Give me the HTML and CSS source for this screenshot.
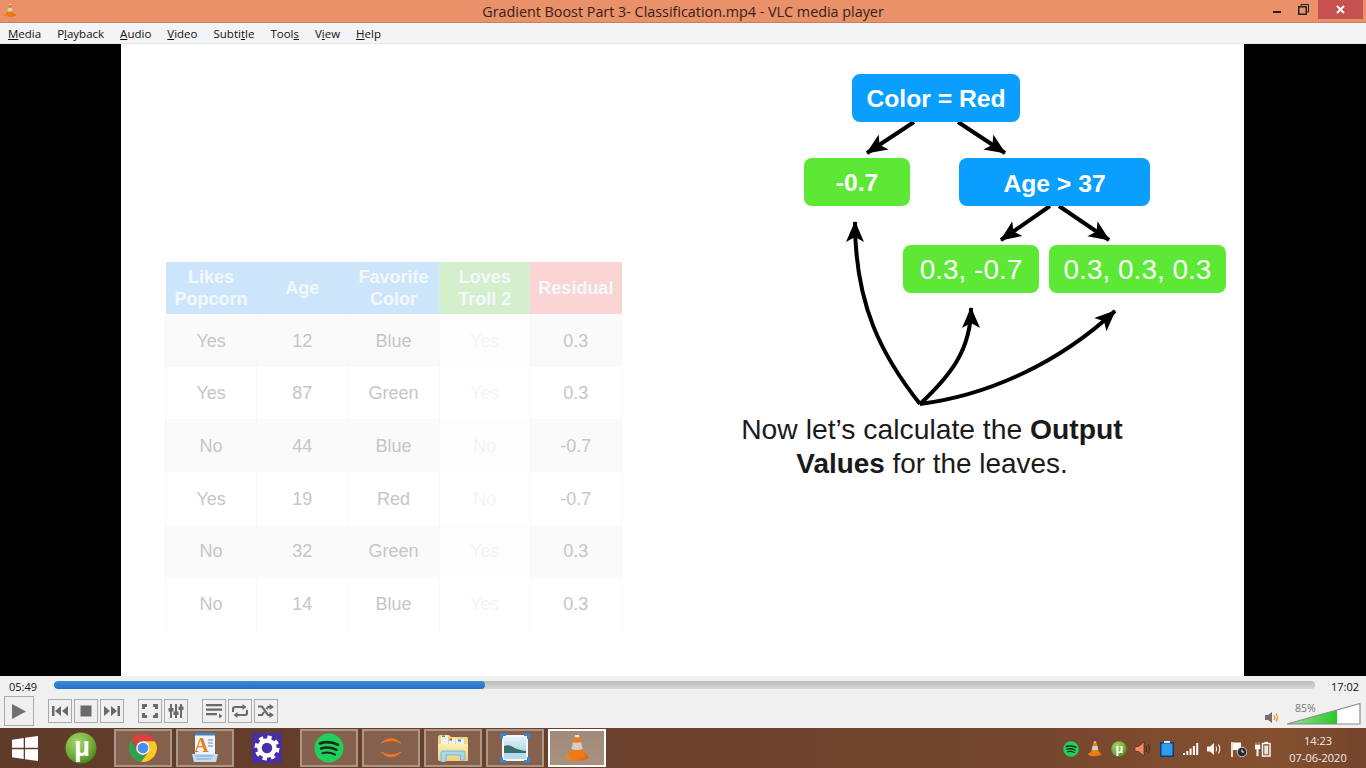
FILE: index.html
```html
<!DOCTYPE html>
<html lang="en">
<head>
<meta charset="utf-8">
<title>VLC media player</title>
<link rel="stylesheet" href="styles.css">
</head>
<body>
<svg class="defs" width="0" height="0" aria-hidden="true">
  <defs>
    <linearGradient id="cone" x1="0" y1="0" x2="1" y2="0"><stop offset="0" stop-color="#f08a1c"/><stop offset="1" stop-color="#e8600c"/></linearGradient>
    <radialGradient id="ut" cx=".38" cy=".3" r=".8"><stop offset="0" stop-color="#a6d468"/><stop offset=".6" stop-color="#6fae38"/><stop offset="1" stop-color="#3f7a1e"/></radialGradient>
    <linearGradient id="vol" x1="0" y1="0" x2="1" y2="0"><stop offset="0" stop-color="#a4dca4"/><stop offset="1" stop-color="#22cc22"/></linearGradient>
    <linearGradient id="sky" x1="0" y1="0" x2="0" y2="1"><stop offset="0" stop-color="#e6f4fa"/><stop offset="1" stop-color="#8cc8e4"/></linearGradient>
    <linearGradient id="fold" x1="0" y1="0" x2="0" y2="1"><stop offset="0" stop-color="#fdf0b0"/><stop offset="1" stop-color="#edd27a"/></linearGradient>
    <symbol id="i-cone" viewBox="0 0 32 32">
      <path d="M3 25 L8 22 H24 L29 25 V28 Q16 33 3 28Z" fill="url(#cone)"/>
      <path d="M13.500 2 H18.500 L25 26 Q16 29 7 26Z" fill="#f07a14"/>
      <path d="M13.200 3 Q16 4.400 18.800 3 L18 1 H14Z" fill="#e6e6e6"/>
      <path d="M11.600 9 Q16 11 20.400 9 L22.500 17 Q16 19.600 9.500 17Z" fill="#cfcfcf"/>
    </symbol>
    <symbol id="i-spot" viewBox="0 0 32 32">
      <circle cx="16" cy="16" r="15.500" fill="#1ed05c"/>
      <path d="M6.500 11 Q16 8 25.500 12.500" fill="none" stroke="#1a2a1c" stroke-width="3" stroke-linecap="round"/>
      <path d="M7.500 16.500 Q16 14 24 18" fill="none" stroke="#1a2a1c" stroke-width="2.600" stroke-linecap="round"/>
      <path d="M9 21.500 Q16 19.600 22.500 23" fill="none" stroke="#1a2a1c" stroke-width="2.200" stroke-linecap="round"/>
    </symbol>
    <symbol id="i-ut" viewBox="0 0 32 32">
      <circle cx="16" cy="16" r="15.500" fill="url(#ut)"/>
      <text x="17" y="24" text-anchor="middle" class="ut-mu">µ</text>
    </symbol>
  </defs>
</svg>

<header class="titlebar">
  <div class="title-left"><svg class="ic-title" aria-hidden="true"><use href="#i-cone"/></svg></div>
  <div class="title-text">Gradient Boost Part 3- Classification.mp4 - VLC media player</div>
  <div class="title-right">
    <span class="win-min"></span>
    <svg class="win-restore" viewBox="0 0 11 11" aria-hidden="true"><path d="M3 2.500V.5H10.500V8H8.500" fill="none" stroke="#222" stroke-width="1"/><rect x=".75" y="2.750" width="7.500" height="7.500" fill="none" stroke="#222" stroke-width="1.500"/></svg>
    <div class="win-close"><svg class="win-x" viewBox="0 0 9 9" aria-hidden="true"><path d="M1 1L8 8M8 1L1 8" stroke="#fff" stroke-width="2"/></svg></div>
  </div>
</header>

<nav class="menubar">
  <span><u>M</u>edia</span><span>P<u>l</u>ayback</span><span><u>A</u>udio</span><span><u>V</u>ideo</span><span>Subti<u>t</u>le</span><span>Tool<u>s</u></span><span>V<u>i</u>ew</span><span><u>H</u>elp</span>
</nav>

<main class="video">
  <section class="slide">
    <table class="data">
      <thead>
        <tr><th class="blue">Likes<br>Popcorn</th><th class="blue">Age</th><th class="blue">Favorite<br>Color</th><th class="green">Loves<br>Troll 2</th><th class="red">Residual</th></tr>
      </thead>
      <tbody>
        <tr><td>Yes</td><td>12</td><td>Blue</td><td class="faint">Yes</td><td>0.3</td></tr>
        <tr><td>Yes</td><td>87</td><td>Green</td><td class="faint">Yes</td><td>0.3</td></tr>
        <tr><td>No</td><td>44</td><td>Blue</td><td class="faint">No</td><td>-0.7</td></tr>
        <tr><td>Yes</td><td>19</td><td>Red</td><td class="faint">No</td><td>-0.7</td></tr>
        <tr><td>No</td><td>32</td><td>Green</td><td class="faint">Yes</td><td>0.3</td></tr>
        <tr><td>No</td><td>14</td><td>Blue</td><td class="faint">Yes</td><td>0.3</td></tr>
      </tbody>
    </table>
    <div class="diagram">
      <svg class="arrows" viewBox="730 44 514 632" aria-hidden="true">
        <defs>
          <marker id="head" markerUnits="userSpaceOnUse" markerWidth="22" markerHeight="20" refX="20" refY="10" orient="auto"><path d="M0 1L21 10L0 19L5 10Z" fill="#000"/></marker>
        </defs>
        <g class="arrow">
          <path d="M914 122L867 153" marker-end="url(#head)"/>
          <path d="M958 122L1005 153" marker-end="url(#head)"/>
          <path d="M1050 206L1001 240" marker-end="url(#head)"/>
          <path d="M1059 206L1109 240" marker-end="url(#head)"/>
          <path d="M920 404C882 356 855 305 855 222" marker-end="url(#head)"/>
          <path d="M920 404C950 376 971 350 971 308" marker-end="url(#head)"/>
          <path d="M920 404C990 395 1060 362 1115 311" marker-end="url(#head)"/>
        </g>
      </svg>
      <div class="node n-blue n-root">Color = Red</div>
      <div class="node n-green n-left">-0.7</div>
      <div class="node n-blue n-age">Age &gt; 37</div>
      <div class="node n-green n-leaf n-l1">0.3, -0.7</div>
      <div class="node n-green n-leaf n-l2">0.3, 0.3, 0.3</div>
      <p class="caption">Now let’s calculate the <b>Output</b><br><span class="caption-2"><b>Values</b> for the leaves.</span></p>
    </div>
  </section>
</main>

<section class="controls">
  <div class="seekrow">
    <span class="time-l">05:49</span>
    <div class="track"><div class="fill"></div></div>
    <span class="time-r">17:02</span>
  </div>
  <div class="btnrow">
    <button class="btn btn-play" aria-label="Play"><svg class="ic-play" viewBox="0 0 14 15"><path d="M0 0L14 7.500L0 15Z"/></svg></button>
    <div class="group g1">
      <button class="btn" aria-label="Previous"><svg class="ic" viewBox="0 0 16 12"><path d="M0 1H2.500V11H0ZM9 1V11L3 6ZM16 1V11L10 6Z"/></svg></button>
      <button class="btn" aria-label="Stop"><svg class="ic" viewBox="0 0 16 12"><path d="M2.500 .5H13.500V11.500H2.500Z"/></svg></button>
      <button class="btn" aria-label="Next"><svg class="ic" viewBox="0 0 16 12"><path d="M16 1H13.500V11H16ZM7 1V11L13 6ZM0 1V11L6 6Z"/></svg></button>
    </div>
    <div class="group g2">
      <button class="btn" aria-label="Fullscreen"><svg class="ic ic-lg" viewBox="0 0 16 14"><path d="M1.500 5V1.500H5M11 1.500H14.500V5M14.500 9V12.500H11M5 12.500H1.500V9" fill="none" stroke="#6a6a6a" stroke-width="3"/></svg></button>
      <button class="btn" aria-label="Extended settings"><svg class="ic ic-lg" viewBox="0 0 16 14"><path d="M3 0V14M8 0V14M13 0V14" stroke="#6a6a6a" stroke-width="2"/><path d="M.5 4H5.500V7.500H.5ZM5.500 7.500H10.500V11H5.500ZM10.500 2.500H15.500V6H10.500Z"/></svg></button>
    </div>
    <div class="group g3">
      <button class="btn" aria-label="Playlist"><svg class="ic ic-lg" viewBox="0 0 16 14"><path d="M0 0H16V2.200H0ZM0 4.500H16V6.700H0ZM0 9H11V11.200H0ZM13 9.500L16.500 12L13 14.500Z"/></svg></button>
      <button class="btn" aria-label="Loop"><svg class="ic ic-lg" viewBox="0 0 16 14"><path d="M1 8V5Q1 3 3 3H11M15 6V9Q15 11 13 11H5" fill="none" stroke="#6a6a6a" stroke-width="2.200"/><path d="M10.500 0L14.500 3L10.500 6ZM5.500 8L1.500 11L5.500 14Z"/></svg></button>
      <button class="btn" aria-label="Random"><svg class="ic ic-lg" viewBox="0 0 16 14"><path d="M0 2.500H4L10 11H13M0 11H4L6 8M8.500 5L10 3H13" fill="none" stroke="#6a6a6a" stroke-width="2.200"/><path d="M11.500 0L16 3L11.500 6ZM11.500 8L16 11L11.500 14Z"/></svg></button>
    </div>
    <div class="volume">
      <svg class="ic-speaker" viewBox="0 0 15 13" aria-hidden="true"><path d="M0 4H3L7 1V12L3 9H0Z" fill="#707070"/><path d="M9 4Q10.500 6.500 9 9M11 2.500Q13.500 6.500 11 10.500" fill="none" stroke="#f29a2e" stroke-width="1.300"/></svg>
      <div class="volbar">
        <svg class="volsvg" viewBox="0 0 75 23" aria-hidden="true">
          <path d="M1 22L51 8.300V22Z" fill="url(#vol)"/>
          <path d="M51 8.300L74 1.500V22H51Z" fill="#fff"/>
          <path d="M1 22L74 1.500V22Z" fill="none" stroke="#8a8a8a" stroke-width="1.200"/>
        </svg>
        <span class="volpct">85%</span>
      </div>
    </div>
  </div>
</section>

<footer class="taskbar">
  <div class="start">
    <svg class="ic-win" viewBox="0 0 26 25" aria-hidden="true"><path d="M0 3.700L11.700 2V11.800H0ZM13 1.800L26 0V11.800H13ZM0 13.200H11.700V23L0 21.300ZM13 13.200H26V25L13 23.200Z" fill="#fff"/></svg>
  </div>
  <div class="apps">
    <div class="app"><svg class="ic-app32" aria-hidden="true"><use href="#i-ut"/></svg></div>
    <div class="app lit"><svg class="ic-app30" viewBox="0 0 48 48" aria-hidden="true">
      <path d="M24 2A22 22 0 0 1 43 13H24A11 11 0 0 0 14 18L5 12A22 22 0 0 1 24 2Z" fill="#e0403a"/>
      <path d="M43 13A22 22 0 0 1 21 46L33 30A11 11 0 0 0 34 20L24 13Z" fill="#fbc922"/>
      <path d="M5 12A22 22 0 0 0 21 46L30 33A11 11 0 0 1 14 29Z" fill="#2ea24c"/>
      <circle cx="24" cy="24" r="11" fill="#f4f4f4"/><circle cx="24" cy="24" r="8.500" fill="#4a8cf0"/>
    </svg></div>
    <div class="app lit"><svg class="ic-app30" viewBox="0 0 26 30" aria-hidden="true">
      <path d="M3 0H23V24H3Z" fill="#eef4fa"/>
      <path d="M3 0H23V2.500H3Z" fill="#3f86cc"/>
      <path d="M0 21H26L24 29H2Z" fill="#c8dcf0"/>
      <path d="M3 23H21M4 26H19" stroke="#7ea6cc" stroke-width="1"/>
      <text x="9.500" y="19" text-anchor="middle" class="pad-a">A</text>
      <path d="M16 7H21M16 10H21M16 13H21" stroke="#5b8fc4" stroke-width="1.200"/>
    </svg></div>
    <div class="app"><svg class="ic-app30" viewBox="0 0 30 30" aria-hidden="true">
      <rect width="30" height="30" fill="#4a2ea6"/>
      <circle cx="15" cy="15" r="7.500" fill="none" stroke="#fff" stroke-width="4.500"/>
      <circle cx="15" cy="15" r="10.500" fill="none" stroke="#fff" stroke-width="4" stroke-dasharray="4.200 4.050"/>
    </svg></div>
    <div class="app lit"><svg class="ic-app30" aria-hidden="true"><use href="#i-spot"/></svg></div>
    <div class="app lit"><svg class="ic-app30" viewBox="0 0 30 30" aria-hidden="true">
      <path d="M5 10Q15 1 25 10Q15 5.500 5 10ZM5 19Q15 29 25 19Q15 24.500 5 19Z" fill="#f0761e" stroke="#f0761e" stroke-width=".8"/>
      <path d="M4 4H6.500V6H4ZM21.500 2.500H24.500V5H21.500ZM6 26H9V28.500H6Z" fill="#6e6460"/>
    </svg></div>
    <div class="app lit"><svg class="ic-folder" viewBox="0 0 32 28" aria-hidden="true">
      <path d="M1 3Q1 1 3 1H12L14 3H30Q31 3 31 5V26Q31 27 30 27H3Q1 27 1 25Z" fill="#ecd684"/>
      <path d="M4 1.500H11V10H4ZM12 4H18V10H12ZM19 5H27V10H19Z" fill="#f2f2ec"/>
      <path d="M5 1.500H8V3H5Z" fill="#2db24a"/><path d="M12.500 4.500H15V6.500H12.500Z" fill="#d0402a"/><path d="M21 5.500H24V7.500H21Z" fill="#2f8fe0"/>
      <path d="M1 10H31V26Q31 27 30 27H3Q1 27 1 25Z" fill="url(#fold)"/>
      <path d="M4 28V19Q4 17 6 17H26Q28 17 28 19V26H23.500V21H9V28Z" fill="#a8d8f0" stroke="#5fa8d0" stroke-width=".7"/>
    </svg></div>
    <div class="app lit"><svg class="ic-app30" viewBox="0 0 30 30" aria-hidden="true">
      <rect x="2" y="2" width="26" height="26" fill="#f4f8fa"/>
      <rect x="4" y="4" width="22" height="22" fill="url(#sky)"/>
      <path d="M4 13Q9 11 13 14Q18 17 26 18V20H4Z" fill="#3a6e6a"/>
      <path d="M4 20H26V26H4Z" fill="#b4dcee"/>
      <path d="M0 6V1Q0 0 1 0H6V3H3V6ZM24 0H29Q30 0 30 1V6H27V3H24ZM30 24V29Q30 30 29 30H24V27H27V24ZM6 30H1Q0 30 0 29V24H3V27H6Z" fill="#3d84c6"/>
    </svg></div>
    <div class="app active"><svg class="ic-app-cone" aria-hidden="true"><use href="#i-cone"/></svg></div>
  </div>
  <div class="tray">
    <div class="slot"><svg class="ic-tray" aria-hidden="true"><use href="#i-spot"/></svg></div>
    <div class="slot"><svg class="ic-tray" aria-hidden="true"><use href="#i-cone"/></svg></div>
    <div class="slot"><svg class="ic-tray" aria-hidden="true"><use href="#i-ut"/></svg></div>
    <div class="slot"><svg class="ic-tray" viewBox="0 0 16 16" aria-hidden="true"><path d="M0 5.500H3.500L9 1V15L3.500 10.500H0Z" fill="#f08a6a" stroke="#3a1a10" stroke-width=".6"/><path d="M11 5Q12.300 8 11 11M13.500 3.500Q15.500 8 13.500 12.500" fill="none" stroke="#4a2a1a" stroke-width="1"/></svg></div>
    <div class="slot"><svg class="ic-tray" viewBox="0 0 14 16" aria-hidden="true"><path d="M0 1H14V16H0Z" fill="#123a78"/><path d="M1.500 2.500H12.500V14.500H1.500Z" fill="#2f9cec"/><path d="M4 0H10V2H4Z" fill="#dfe8f0"/></svg></div>
    <div class="slot"><svg class="ic-tray" viewBox="0 0 16 16" aria-hidden="true"><path d="M0 12H2V14H0ZM3.300 10H5.300V14H3.300ZM6.600 7.500H8.600V14H6.600ZM9.900 5H11.900V14H9.900ZM13.200 2H15.200V14H13.200Z" fill="#fff"/></svg></div>
    <div class="slot"><svg class="ic-tray" viewBox="0 0 16 16" aria-hidden="true"><path d="M0 5.500H3L7 2V14L3 10.500H0Z" fill="#f2f2f2"/><path d="M9 5.500Q10.300 8 9 10.500M11.500 3.500Q14 8 11.500 12.500" fill="none" stroke="#f2f2f2" stroke-width="1.100"/></svg></div>
    <div class="slot"><svg class="ic-tray" viewBox="0 0 16 16" aria-hidden="true"><path d="M1 1V16" stroke="#fff" stroke-width="1.600"/><path d="M2 1.500H10V9H2Z" fill="#fff"/><circle cx="11" cy="11" r="4.800" fill="#2c2c2c" stroke="#ddd" stroke-width=".9"/><path d="M11 8.500V11H13" stroke="#fff" stroke-width="1" fill="none"/></svg></div>
    <div class="slot"><svg class="ic-tray" viewBox="0 0 16 16" aria-hidden="true"><path d="M1 1V4M4 1V4M0 4H5V8H3.200V15H1.800V8H0Z" fill="#fff" stroke="#fff" stroke-width=".5"/><rect x="7.500" y="2.500" width="7.500" height="12.500" fill="none" stroke="#fff" stroke-width="1.400"/><path d="M9.500 .8H13V2.500H9.500Z" fill="#fff"/><path d="M9.300 4.500H13.200V13.300H9.300Z" fill="#e8e8e8"/></svg></div>
    <div class="clock"><span>14:23</span><span>07-06-2020</span></div>
  </div>
</footer>
</body>
</html>
```

FILE: styles.css
```css
* { box-sizing: border-box; }
html, body { margin: 0; padding: 0; }
body {
  width: 1366px;
  height: 768px;
  overflow: hidden;
  display: flex;
  flex-direction: column;
  font-family: "Open Sans", "Liberation Sans", sans-serif;
  background: #000;
}
.defs { position: absolute; }

/* title bar */
.titlebar {
  height: 23px;
  flex: none;
  display: grid;
  grid-template-columns: 1fr auto 1fr;
  align-items: start;
  background: #ea9169;
  border-bottom: 1px solid #c97f5d;
}
.title-left { padding: 3px 0 0 3px; }
.ic-title { width: 14px; height: 15px; display: block; }
.title-text {
  font-size: 14.350px;
  line-height: 23px;
  color: #33211a;
  white-space: nowrap;
}
.title-right { display: flex; align-items: flex-start; justify-content: flex-end; padding-right: 3px; }
.win-min { width: 8px; height: 2px; margin: 11px 0 0 0; background: #222; }
.win-restore { width: 11px; height: 11px; margin: 4px 0 0 17px; }
.win-close {
  width: 45px;
  height: 19px;
  margin-left: 9px;
  background: #c75050;
  display: flex;
  align-items: center;
  justify-content: center;
}
.win-x { width: 9px; height: 9px; }

/* menu */
.menubar {
  height: 21px;
  flex: none;
  display: flex;
  gap: 16px;
  padding-left: 8px;
  background: #f3f4f6;
  border-bottom: 1px solid #e8e8e8;
  font-size: 11.500px;
  line-height: 21px;
  color: #111;
}

/* video */
.video {
  height: 632px;
  flex: none;
  padding: 0 122px 0 121px;
  background: #000;
}
.slide {
  height: 632px;
  display: flex;
  background: #fff;
}
.data {
  flex: none;
  width: 457px;
  height: 368px;
  margin: 218px 0 0 44px;
  border-collapse: collapse;
  table-layout: fixed;
  font-family: "Liberation Sans", Arial, sans-serif;
  font-size: 18px;
  text-align: center;
  color: #c6c6c6;
}
.data th {
  height: 52px;
  padding: 0;
  font-weight: 700;
  line-height: 22px;
  color: #f3f8fd;
}
.data .blue { background: #cde5fb; }
.data .green { background: #d3efcb; }
.data .red { background: #fbd5d3; }
.data td {
  padding: 2px 0 0;
  height: 52.500px;
  border-left: 1px solid #f8f8f8;
  border-right: 1px solid #f8f8f8;
}
.data tbody tr:nth-child(odd) td { background: #fafafa; }
.data tbody tr:nth-child(odd) td.faint { background: #fdfdfd; }
.data td.faint { color: #f4f4f4; }

/* tree diagram: free canvas */
.diagram {
  position: relative;
  width: 514px;
  height: 632px;
  margin-left: auto;
  font-family: "Liberation Sans", Arial, sans-serif;
}
.arrows { position: absolute; left: 0; top: 0; width: 514px; height: 632px; }
.arrow path { fill: none; stroke: #000; stroke-width: 4; }
.arrow marker path { stroke: none; }
.node {
  position: absolute;
  height: 48px;
  border-radius: 8px;
  color: #fff;
  font-size: 24.700px;
  font-weight: 700;
  line-height: 50px;
  text-align: center;
  white-space: nowrap;
}
.n-blue { background: #0a9fff; }
.n-green { background: #5ce835; }
.n-leaf { font-size: 28px; font-weight: 400; }
.n-root { left: 122px; top: 30px; width: 168px; }
.n-left { left: 74px; top: 114px; width: 106px; }
.n-age { left: 229px; top: 114px; width: 191px; line-height: 51px; }
.n-l1 { left: 173px; top: 201px; width: 136px; }
.n-l2 { left: 319px; top: 201px; width: 177px; }
.caption {
  position: absolute;
  left: 2px;
  top: 369px;
  width: 400px;
  margin: 0;
  font-size: 28.300px;
  line-height: 33.500px;
  text-align: center;
  color: #1a1a1a;
  white-space: nowrap;
}
.caption-2 { font-size: 27.900px; }

/* controls */
.controls {
  height: 52px;
  flex: none;
  background: #f0f0f0;
  font-family: "Open Sans", "Liberation Sans", sans-serif;
}
.seekrow {
  height: 20px;
  display: flex;
  align-items: center;
}
.time-l { width: 54px; padding-left: 9px; font-size: 11px; color: #111; }
.time-r { width: 51px; padding-left: 16px; font-size: 11px; color: #111; }
.track {
  flex: 1;
  height: 8px;
  margin-bottom: 3px;
  border-radius: 4px;
  background: linear-gradient(#bdbdbd, #d6d6d6);
  overflow: hidden;
}
.fill { width: 431px; height: 100%; border-radius: 4px; background: linear-gradient(#3a8adc, #2470c4); }
.btnrow {
  height: 32px;
  display: flex;
  align-items: flex-start;
  padding-left: 4px;
}
.btn {
  width: 24px;
  height: 24px;
  margin-top: 3px;
  padding: 0;
  display: flex;
  align-items: center;
  justify-content: center;
  background: #f0f0f0;
  border: 1px solid #aaa;
  border-radius: 0;
}
.btn-play { width: 30px; height: 30px; margin-top: 0; }
.ic-play { width: 14px; height: 15px; fill: #707070; }
.ic { width: 16px; height: 12px; fill: #6a6a6a; }
.ic-lg { height: 14px; }
.group { display: flex; gap: 2px; }
.g1 { margin-left: 14px; }
.g2 { margin-left: 14px; }
.g3 { margin-left: 14px; }
.volume {
  margin-left: auto;
  display: flex;
  align-items: flex-end;
  padding-right: 5px;
}
.ic-speaker { width: 15px; height: 13px; margin: 0 6px 1px 0; }
.volbar { position: relative; width: 75px; height: 29px; display: flex; align-items: flex-end; }
.volsvg { width: 75px; height: 23px; display: block; }
.volpct {
  position: absolute;
  left: 9px;
  top: 6px;
  font-size: 10.500px;
  line-height: 13px;
  color: #777;
}

/* taskbar */
.taskbar {
  height: 40px;
  flex: none;
  display: flex;
  padding: 1px 0;
  background: linear-gradient(90deg, #5f3b2a 0%, #6a412d 45%, #74462e 75%, #85502f 93%, #74452c 100%);
}
.start { width: 52px; display: flex; align-items: center; padding-left: 12px; }
.ic-win { width: 26px; height: 25px; }
.apps { display: flex; gap: 4px; }
.app {
  width: 58px;
  height: 38px;
  display: flex;
  align-items: center;
  justify-content: center;
}
.lit { background: #85604c; border: 2px solid #ac9686; }
.active { background: linear-gradient(#a08a7a, #a8917f); border: 2px solid #fff; }
.ic-app32 { width: 32px; height: 32px; }
.ic-app30 { width: 30px; height: 30px; }
.ic-folder { width: 32px; height: 28px; }
.ic-app-cone { width: 28px; height: 30px; }
.ut-mu { font: 700 27px "Liberation Sans", Arial, sans-serif; fill: #fff; }
.pad-a { font: 700 20px "Liberation Serif", serif; fill: #e8801c; }
.tray { margin-left: auto; display: flex; padding-right: 5px; }
.slot { width: 24px; height: 38px; display: flex; align-items: center; justify-content: center; padding-top: 2px; }
.ic-tray { width: 16px; height: 16px; }
.clock {
  width: 86px;
  display: flex;
  flex-direction: column;
  align-items: center;
  justify-content: center;
  gap: 2px;
  padding-top: 2px;
  font-size: 11px;
  line-height: 15px;
  color: #eee;
}
```
